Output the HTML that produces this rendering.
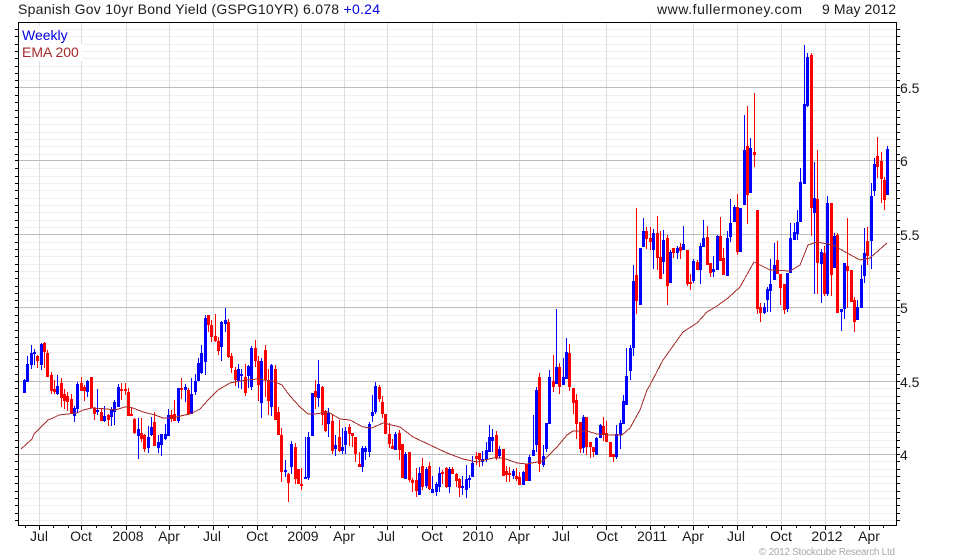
<!DOCTYPE html>
<html><head><meta charset="utf-8"><title>Spanish Gov 10yr Bond Yield</title>
<style>
html,body{margin:0;padding:0;background:#fff}
svg{display:block}
text{font-family:"Liberation Sans",Arial,sans-serif;font-size:14px;fill:#1a1a1a}
</style></head><body>
<svg width="980" height="560" viewBox="0 0 980 560" xmlns="http://www.w3.org/2000/svg">
<rect width="980" height="560" fill="#fff"/>
<g shape-rendering="crispEdges" fill="none">
<path stroke="#f0f0f0" d="M19 29.5H896M19 36.5H896M19 44.5H896M19 51.5H896M19 58.5H896M19 66.5H896M19 73.5H896M19 80.5H896M19 95.5H896M19 102.5H896M19 110.5H896M19 117.5H896M19 124.5H896M19 132.5H896M19 139.5H896M19 146.5H896M19 154.5H896M19 168.5H896M19 176.5H896M19 183.5H896M19 190.5H896M19 198.5H896M19 205.5H896M19 212.5H896M19 220.5H896M19 227.5H896M19 242.5H896M19 249.5H896M19 256.5H896M19 264.5H896M19 271.5H896M19 278.5H896M19 286.5H896M19 293.5H896M19 300.5H896M19 315.5H896M19 322.5H896M19 330.5H896M19 337.5H896M19 344.5H896M19 352.5H896M19 359.5H896M19 366.5H896M19 374.5H896M19 388.5H896M19 396.5H896M19 403.5H896M19 410.5H896M19 418.5H896M19 425.5H896M19 432.5H896M19 440.5H896M19 447.5H896M19 461.5H896M19 469.5H896M19 476.5H896M19 483.5H896M19 491.5H896M19 498.5H896M19 505.5H896M19 513.5H896M19 520.5H896"/>
<path stroke="#dcdcdc" d="M39.5 23V525M81.5 23V525M126.5 23V525M169.5 23V525M213.5 23V525M257.5 23V525M301.5 23V525M344.5 23V525M387.5 23V525M432.5 23V525M476.5 23V525M519.5 23V525M562.5 23V525M606.5 23V525M650.5 23V525M693.5 23V525M737.5 23V525M781.5 23V525M825.5 23V525M869.5 23V525"/>
<path stroke="#bdbdbd" d="M19 87.5H896M19 160.5H896M19 234.5H896M19 307.5H896M19 381.5H896M19 454.5H896"/>
<!-- blue wicks -->
<path stroke="#0000ff" d="M24.5 379V393M27.5 356V382M31.5 345V369M34.5 349V365M41.5 343V370M57.5 375V395M74.5 406V422M77.5 382V413M87.5 380V397M97.5 389V415M104.5 406V422M111.5 407V426M114.5 400V425M118.5 384V407M138.5 418V459M148.5 426V453M151.5 417V436M158.5 435V453M161.5 434V456M165.5 424V440M168.5 409V436M178.5 388V423M185.5 384V402M191.5 378V414M195.5 374V395M198.5 358V381M201.5 345V374M205.5 315V375M221.5 321V361M225.5 308V332M238.5 364V388M241.5 369V389M248.5 365V388M251.5 346V390M261.5 358V418M271.5 364V416M285.5 460V477M291.5 441V474M305.5 437V479M308.5 432V480M312.5 393V436M318.5 360V407M328.5 408V437M335.5 435V456M342.5 428V454M345.5 427V454M362.5 446V472M365.5 446V460M369.5 422V457M372.5 395V422M375.5 382V414M395.5 432V450M405.5 452V479M419.5 467V495M426.5 467V488M432.5 476V493M436.5 482V496M439.5 467V492M449.5 467V493M462.5 476V495M466.5 465V498M469.5 475V488M472.5 456V477M482.5 451V466M486.5 442V462M489.5 425V452M492.5 429V452M499.5 446V458M513.5 469V479M523.5 471V485M529.5 455V481M533.5 415V456M536.5 387V452M543.5 445V467M546.5 423V452M549.5 370V424M556.5 309V384M563.5 358V385M566.5 338V379M583.5 415V453M596.5 437V455M600.5 424V438M616.5 425V459M620.5 420V449M623.5 395V424M626.5 348V405M630.5 345V380M633.5 265V356M640.5 248V305M643.5 218V247M653.5 229V269M663.5 230V274M670.5 250V283M677.5 246V259M683.5 226V250M693.5 259V283M700.5 243V284M703.5 220V247M713.5 256V277M717.5 235V270M727.5 231V276M730.5 199V242M734.5 205V222M740.5 208V252M744.5 115V205M750.5 138V193M764.5 303V314M767.5 287V312M770.5 259V312M774.5 243V280M787.5 273V312M790.5 223V273M794.5 223V240M797.5 210V240M800.5 168V222M804.5 45V184M807.5 53V107M814.5 162V294M821.5 249V303M827.5 196V296M834.5 233V268M841.5 309V331M844.5 263V319M857.5 300V320M861.5 265V308M864.5 228V283M871.5 183V269M874.5 158V196M887.5 146V195"/>
<!-- blue bodies -->
<path stroke="#0000ff" stroke-width="3" d="M24.5 380V393M27.5 364V382M31.5 353V365M34.5 352V354M41.5 344V365M57.5 386V394M74.5 408V416M77.5 384V409M87.5 381V392M97.5 410V412M104.5 416V421M111.5 409V417M114.5 402V412M118.5 387V407M138.5 429V436M148.5 437V448M151.5 427V435M158.5 442V448M161.5 434V445M165.5 434V439M168.5 415V436M178.5 388V421M185.5 387V390M191.5 394V414M195.5 381V392M198.5 363V381M201.5 353V373M205.5 318V362M221.5 322V347M225.5 320V324M238.5 369V381M241.5 374V376M248.5 366V376M251.5 348V387M261.5 361V403M271.5 365V407M285.5 470V472M291.5 444V467M305.5 477V479M308.5 437V478M312.5 393V436M318.5 384V398M328.5 413V424M335.5 445V449M342.5 447V451M345.5 431V445M362.5 448V467M365.5 448V452M369.5 424V452M372.5 412V416M375.5 386V412M395.5 434V450M405.5 454V479M419.5 473V495M426.5 469V486M432.5 489V493M436.5 484V492M439.5 473V487M449.5 469V487M462.5 486V488M466.5 479V490M469.5 478V480M472.5 463V477M482.5 459V462M486.5 450V460M489.5 437V452M492.5 437V441M499.5 449V456M513.5 471V476M523.5 472V485M529.5 457V481M533.5 450V456M536.5 390V445M543.5 456V465M546.5 423V449M549.5 377V424M556.5 367V384M563.5 377V385M566.5 352V379M583.5 417V448M596.5 438V455M600.5 425V438M616.5 434V457M620.5 423V435M623.5 401V424M626.5 376V405M630.5 348V371M633.5 281V348M640.5 248V305M643.5 231V247M653.5 233V250M663.5 240V262M670.5 252V283M677.5 248V253M683.5 244V250M693.5 261V281M700.5 246V270M703.5 238V247M713.5 269V272M717.5 236V270M727.5 238V276M730.5 223V237M734.5 207V222M740.5 208V252M744.5 150V205M750.5 148V193M764.5 307V313M767.5 289V300M770.5 284V291M774.5 265V280M787.5 273V309M790.5 238V273M794.5 232V240M797.5 222V234M800.5 182V222M804.5 104V184M807.5 57V106M814.5 198V213M821.5 252V264M827.5 203V294M834.5 236V268M841.5 309V312M844.5 263V309M857.5 307V320M861.5 279V308M864.5 253V276M871.5 196V241M874.5 164V191M887.5 149V195"/>
<!-- red wicks -->
<path stroke="#ff0000" d="M37.5 355V368M44.5 342V368M47.5 350V377M51.5 372V394M54.5 380V394M61.5 378V407M64.5 389V409M67.5 392V411M71.5 394V414M81.5 377V391M84.5 385V401M91.5 377V408M94.5 407V420M101.5 409V421M108.5 414V426M121.5 383V400M125.5 383V395M128.5 388V416M131.5 407V416M134.5 418V434M141.5 418V442M144.5 434V452M154.5 412V446M171.5 410V422M174.5 400V421M181.5 378V399M188.5 388V414M208.5 315V332M211.5 320V342M215.5 314V342M218.5 337V355M228.5 319V358M231.5 353V373M235.5 367V386M245.5 364V396M255.5 340V367M258.5 356V401M265.5 345V397M268.5 369V415M275.5 365V420M278.5 407V435M281.5 428V482M288.5 473V502M295.5 443V484M298.5 469V484M301.5 468V490M315.5 380V409M322.5 386V425M325.5 410V432M332.5 414V454M339.5 420V452M349.5 424V446M352.5 433V447M355.5 437V462M359.5 452V467M379.5 385V402M382.5 396V418M385.5 414V434M389.5 423V448M392.5 439V449M399.5 430V460M402.5 444V478M409.5 452V482M412.5 478V492M416.5 468V497M422.5 458V490M429.5 462V490M442.5 470V484M446.5 467V488M452.5 467V474M456.5 473V487M459.5 478V497M476.5 452V465M479.5 453V467M496.5 431V460M503.5 449V476M506.5 466V482M509.5 467V482M516.5 468V481M519.5 472V485M526.5 464V481M539.5 373V472M553.5 355V392M559.5 363V394M569.5 344V391M573.5 388V414M576.5 394V439M580.5 422V453M586.5 417V455M590.5 442V458M593.5 447V457M603.5 417V441M606.5 421V442M610.5 442V457M613.5 454V462M636.5 208V314M646.5 227V249M650.5 227V250M657.5 216V270M660.5 231V279M667.5 235V305M673.5 248V258M680.5 243V259M687.5 250V286M690.5 274V290M697.5 260V270M707.5 226V265M710.5 263V277M720.5 217V261M723.5 248V275M737.5 194V255M747.5 106V224M754.5 93V167M757.5 210V314M760.5 303V322M777.5 241V274M780.5 274V305M784.5 284V314M811.5 53V236M817.5 150V294M824.5 246V296M831.5 203V296M837.5 233V313M847.5 218V308M851.5 270V302M854.5 297V332M867.5 227V265M877.5 137V178M881.5 152V203M884.5 177V210"/>
<!-- red bodies -->
<path stroke="#ff0000" stroke-width="3" d="M37.5 356V361M44.5 343V352M47.5 353V377M51.5 375V391M54.5 389V392M61.5 383V398M64.5 394V401M67.5 396V402M71.5 399V414M81.5 383V391M84.5 387V391M91.5 377V408M94.5 408V414M101.5 412V421M108.5 415V420M121.5 389V391M125.5 389V391M128.5 392V416M131.5 414V416M134.5 419V433M141.5 433V439M144.5 435V449M154.5 422V446M171.5 415V419M174.5 414V421M181.5 388V390M188.5 390V414M208.5 315V325M211.5 325V337M215.5 336V341M218.5 341V351M228.5 322V357M231.5 356V368M235.5 370V380M245.5 377V393M255.5 348V361M258.5 361V385M265.5 350V380M268.5 381V401M275.5 369V420M278.5 412V435M281.5 435V472M288.5 474V483M295.5 447V479M298.5 469V484M301.5 484V486M315.5 391V397M322.5 387V415M325.5 411V431M332.5 421V451M339.5 437V451M349.5 427V434M352.5 433V436M355.5 437V454M359.5 464V467M379.5 387V399M382.5 402V414M385.5 414V434M389.5 434V444M392.5 446V449M399.5 433V450M402.5 444V478M409.5 452V480M412.5 480V483M416.5 480V491M422.5 466V487M429.5 466V489M442.5 472V474M446.5 468V487M452.5 469V474M456.5 474V481M459.5 479V488M476.5 456V459M479.5 453V460M496.5 435V458M503.5 449V476M506.5 471V475M509.5 473V475M516.5 476V479M519.5 477V485M526.5 464V481M539.5 377V464M553.5 381V387M559.5 367V387M569.5 353V387M573.5 388V403M576.5 400V424M580.5 422V449M586.5 417V447M590.5 442V447M593.5 447V452M603.5 426V434M606.5 433V442M610.5 442V457M613.5 454V457M636.5 275V301M646.5 231V239M650.5 238V242M657.5 233V258M660.5 257V279M667.5 238V286M673.5 248V253M680.5 247V251M687.5 250V284M690.5 282V284M697.5 262V270M707.5 237V265M710.5 263V273M720.5 236V261M723.5 258V275M737.5 207V252M747.5 146V195M754.5 152V155M757.5 210V309M760.5 307V313M777.5 260V274M780.5 274V288M784.5 284V310M811.5 55V208M817.5 199V263M824.5 253V294M831.5 203V275M837.5 235V313M847.5 266V271M851.5 270V302M854.5 300V322M867.5 241V256M877.5 156V167M881.5 161V179M884.5 180V200"/>
<!-- axes -->
<path stroke="#000" d="M18.5 22V526M18 22.5H897M18 525.5H897M896.5 22V526"/>
<path stroke="#000" d="M15 29.5H18M15 36.5H18M15 44.5H18M15 51.5H18M15 58.5H18M15 66.5H18M15 73.5H18M15 80.5H18M15 87.5H18M15 95.5H18M15 102.5H18M15 110.5H18M15 117.5H18M15 124.5H18M15 132.5H18M15 139.5H18M15 146.5H18M15 154.5H18M15 160.5H18M15 168.5H18M15 176.5H18M15 183.5H18M15 190.5H18M15 198.5H18M15 205.5H18M15 212.5H18M15 220.5H18M15 227.5H18M15 234.5H18M15 242.5H18M15 249.5H18M15 256.5H18M15 264.5H18M15 271.5H18M15 278.5H18M15 286.5H18M15 293.5H18M15 300.5H18M15 307.5H18M15 315.5H18M15 322.5H18M15 330.5H18M15 337.5H18M15 344.5H18M15 352.5H18M15 359.5H18M15 366.5H18M15 374.5H18M15 381.5H18M15 388.5H18M15 396.5H18M15 403.5H18M15 410.5H18M15 418.5H18M15 425.5H18M15 432.5H18M15 440.5H18M15 447.5H18M15 454.5H18M15 461.5H18M15 469.5H18M15 476.5H18M15 483.5H18M15 491.5H18M15 498.5H18M15 505.5H18M15 513.5H18M15 520.5H18"/>
<path stroke="#000" d="M897 29.5H900M897 36.5H900M897 44.5H900M897 51.5H900M897 58.5H900M897 66.5H900M897 73.5H900M897 80.5H900M897 87.5H900M897 95.5H900M897 102.5H900M897 110.5H900M897 117.5H900M897 124.5H900M897 132.5H900M897 139.5H900M897 146.5H900M897 154.5H900M897 160.5H900M897 168.5H900M897 176.5H900M897 183.5H900M897 190.5H900M897 198.5H900M897 205.5H900M897 212.5H900M897 220.5H900M897 227.5H900M897 234.5H900M897 242.5H900M897 249.5H900M897 256.5H900M897 264.5H900M897 271.5H900M897 278.5H900M897 286.5H900M897 293.5H900M897 300.5H900M897 307.5H900M897 315.5H900M897 322.5H900M897 330.5H900M897 337.5H900M897 344.5H900M897 352.5H900M897 359.5H900M897 366.5H900M897 374.5H900M897 381.5H900M897 388.5H900M897 396.5H900M897 403.5H900M897 410.5H900M897 418.5H900M897 425.5H900M897 432.5H900M897 440.5H900M897 447.5H900M897 454.5H900M897 461.5H900M897 469.5H900M897 476.5H900M897 483.5H900M897 491.5H900M897 498.5H900M897 505.5H900M897 513.5H900M897 520.5H900"/>
<path stroke="#000" d="M25.5 526V528M39.5 526V530M53.5 526V528M68.5 526V528M81.5 526V530M96.5 526V528M111.5 526V528M126.5 526V530M140.5 526V528M155.5 526V528M169.5 526V530M184.5 526V528M198.5 526V528M213.5 526V530M228.5 526V528M242.5 526V528M257.5 526V530M272.5 526V528M286.5 526V528M301.5 526V530M315.5 526V528M330.5 526V528M344.5 526V530M359.5 526V528M373.5 526V528M387.5 526V530M402.5 526V528M417.5 526V528M432.5 526V530M446.5 526V528M461.5 526V528M476.5 526V530M490.5 526V528M505.5 526V528M519.5 526V530M534.5 526V528M548.5 526V528M562.5 526V530M577.5 526V528M592.5 526V528M606.5 526V530M621.5 526V528M635.5 526V528M650.5 526V530M664.5 526V528M678.5 526V528M693.5 526V530M708.5 526V528M722.5 526V528M737.5 526V530M752.5 526V528M766.5 526V528M781.5 526V530M796.5 526V528M810.5 526V528M825.5 526V530M840.5 526V528M854.5 526V528M869.5 526V530M883.5 526V528"/>
<rect x="20" y="26" width="34" height="18" fill="#fff"/>
<rect x="20" y="44" width="62" height="17" fill="#fff"/>
</g>
<polyline fill="none" shape-rendering="crispEdges" stroke="#a52a2a" stroke-width="1" points="21,449 32,439 34,434 43,425 48,420 53,418 59,415 68,414 77,413 83,410 92,408 107,409 115,410 125,407 133,408 143,412 155,415 163,418 172,418 180,416 190,414 200,409 208,400 218,390 230,383 240,381 257,379 273,381 282,385 290,396 300,407 308,414 315,414 328,412 330,413 340,419 350,420 363,427 372,428 383,423 400,427 413,437 430,445 447,453 463,459 477,462 493,458 503,458 517,463 527,464 537,462 543,461 557,447 567,435 573,431 587,431 597,434 610,435 622,435 630,428 640,410 647,390 650,385 663,360 673,346 683,332 697,323 707,312 717,306 728,298 740,287 754,262 770,270 790,271 800,265 808,245 817,242 833,245 847,253 860,260 870,258 887,243"/>
<text x="18" y="14" textLength="362" lengthAdjust="spacing">Spanish Gov 10yr Bond Yield (GSPG10YR) 6.078 <tspan style="fill:#0000e0">+0.24</tspan></text>
<text x="657" y="14" textLength="145" lengthAdjust="spacing">www.fullermoney.com</text>
<text x="822" y="14" textLength="74" lengthAdjust="spacing">9 May 2012</text>
<text x="22" y="40" style="fill:#0000e0">Weekly</text>
<text x="22" y="57" style="fill:#a52a2a">EMA 200</text>
<g>
<text x="900" y="93">6.5</text>
<text x="900" y="166">6</text>
<text x="900" y="240">5.5</text>
<text x="900" y="313">5</text>
<text x="900" y="387">4.5</text>
<text x="900" y="460">4</text>
</g>
<g text-anchor="middle">
<text x="39" y="541">Jul</text><text x="81" y="541">Oct</text><text x="128" y="541">2008</text><text x="169" y="541">Apr</text><text x="212" y="541">Jul</text><text x="257" y="541">Oct</text><text x="303" y="541">2009</text><text x="344" y="541">Apr</text><text x="386" y="541">Jul</text><text x="432" y="541">Oct</text><text x="478" y="541">2010</text><text x="519" y="541">Apr</text><text x="561" y="541">Jul</text><text x="607" y="541">Oct</text><text x="652" y="541">2011</text><text x="693" y="541">Apr</text><text x="736" y="541">Jul</text><text x="781" y="541">Oct</text><text x="827" y="541">2012</text><text x="869" y="541">Apr</text>
</g>
<text x="759" y="555" textLength="136" lengthAdjust="spacing" style="font-size:10px;fill:#a8a8a8">© 2012 Stockcube Research Ltd</text>
</svg>
</body></html>
